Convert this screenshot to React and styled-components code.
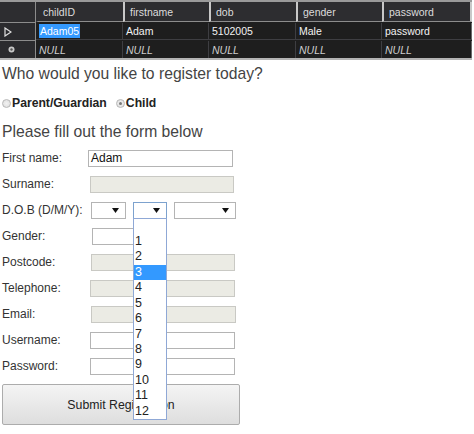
import React from "react";
import styled, { createGlobalStyle } from "styled-components";

const GlobalStyle = createGlobalStyle`
  body {
    margin: 0;
    background: #ffffff;
    font-family: "Liberation Sans", Arial, sans-serif;
    color: #333333;
  }
`;

const Page = styled.div`
  width: 474px;
  height: 434px;
  overflow: hidden;
  position: relative;
`;

/* ---------- results grid ---------- */

const ResultsGrid = styled.div`
  width: 472px;
  display: grid;
  grid-template-columns: 36px 87px 86px 87px 86px 90px;
  background: #1e1e1e;
  border-top: 2px solid #9a9a9a;
  border-bottom: 2px solid #b4b4b4;
  font-family: "Liberation Sans", Arial, sans-serif;
  font-size: 10.5px;
`;

const CornerCell = styled.div`
  height: 20px;
  background: #2d2d30;
  border-right: 1px solid #8c8c8c;
  border-bottom: 1px solid #8c8c8c;
`;

const HeaderCell = styled.div`
  height: 20px;
  box-sizing: border-box;
  background: #2d2d30;
  color: #dcdcdc;
  display: flex;
  align-items: center;
  padding-left: 5px;
  border-left: 2px solid ${(p) => (p.$first ? "transparent" : "#c8c8c8")};
  border-right: ${(p) => (p.$last ? "2px solid #c8c8c8" : "none")};
  border-bottom: 1px solid #8c8c8c;
`;

const RowHeader = styled.div`
  height: 17px;
  background: #2b2b2e;
  border-right: 1px solid #8c8c8c;
  border-bottom: ${(p) => (p.$last ? "none" : "1px solid #8c8c8c")};
  display: flex;
  align-items: center;
  padding-left: ${(p) => p.$pad}px;
`;

const DataCell = styled.div`
  height: 17px;
  box-sizing: border-box;
  display: flex;
  align-items: center;
  padding-left: 3px;
  color: ${(p) => (p.$null ? "#cfcfcf" : "#f2f2f2")};
  font-style: ${(p) => (p.$null ? "italic" : "normal")};
  border-right: 1px solid ${(p) => (p.$last ? "#6a6a6a" : "#3e3e42")};
  border-bottom: ${(p) => (p.$lastRow ? "none" : "1px solid #3e3e42")};
`;

const Selected = styled.span`
  background: #3399ff;
  color: #ffffff;
  padding: 1px 1px;
`;

/* ---------- form ---------- */

const Content = styled.div`
  padding-left: 2px;
`;

const Title = styled.div`
  font-size: 15.7px;
  line-height: 18px;
  color: #444444;
  margin-top: ${(p) => p.$top}px;
`;

const RadioRow = styled.div`
  display: flex;
  align-items: center;
  height: 16px;
  margin-top: 12px;
  gap: 9px;
`;

const RadioLabel = styled.label`
  display: flex;
  align-items: center;
  font-size: 12.2px;
  font-weight: bold;
  color: #222222;
  gap: 1px;
`;

const Radio = styled.span`
  width: 9px;
  height: 9px;
  box-sizing: border-box;
  border-radius: 50%;
  border: 1px solid #b8b8b8;
  background: radial-gradient(circle, #f2f2f2 0%, #dcdcdc 100%);
  display: flex;
  align-items: center;
  justify-content: center;
  &::after {
    content: "";
    width: 3px;
    height: 3px;
    border-radius: 50%;
    background: ${(p) => (p.$checked ? "#7a7a7a" : "transparent")};
  }
`;

const Form = styled.div`
  margin-top: 4px;
`;

const FieldRow = styled.div`
  height: 26px;
  display: flex;
  align-items: center;
`;

const Label = styled.div`
  width: 88px;
  font-size: 12px;
  color: #333333;
`;

const TextBox = styled.div`
  width: ${(p) => p.$w}px;
  height: 17px;
  box-sizing: border-box;
  margin-left: ${(p) => p.$ml || 0}px;
  border: 1px solid ${(p) => (p.$disabled ? "#c9c9c4" : "#b4b4b4")};
  background: ${(p) => (p.$disabled ? "#ebebe4" : "#ffffff")};
  font-size: 12px;
  color: #111111;
  padding-left: 2px;
  display: flex;
  align-items: center;
`;

const SelectGroup = styled.div`
  display: flex;
  gap: 7px;
  margin-left: 1px;
`;

const SelectWrap = styled.div`
  position: relative;
`;

const Select = styled.div`
  width: ${(p) => p.$w}px;
  height: 17px;
  box-sizing: border-box;
  border: 1px solid ${(p) => (p.$focus ? "#7da2ce" : "#b4b4b4")};
  background: #ffffff;
  display: flex;
  align-items: center;
  justify-content: flex-end;
  padding-right: 6px;
`;

const DropList = styled.div`
  position: absolute;
  top: 16px;
  left: 0;
  width: 34px;
  box-sizing: border-box;
  border: 1px solid #8fa8d6;
  background: #ffffff;
  z-index: 5;
`;

const Option = styled.div`
  height: 15.45px;
  line-height: 15.45px;
  font-size: 12.5px;
  padding-left: 1px;
  color: ${(p) => (p.$active ? "#ffffff" : "#222222")};
  background: ${(p) => (p.$active ? "#3399ff" : "transparent")};
`;

const SubmitButton = styled.button`
  display: block;
  width: 238px;
  height: 41px;
  margin-top: 5px;
  border: 1px solid #acacac;
  border-radius: 2px;
  background: linear-gradient(#f4f4f4, #dedede);
  font-family: "Liberation Sans", Arial, sans-serif;
  font-size: 12.3px;
  color: #222222;
  padding: 0;
`;

const Arrow = () => (
  <svg width="7" height="5" viewBox="0 0 7 5">
    <path d="M0 0H7L3.5 5Z" fill="#111" />
  </svg>
);

const columns = ["childID", "firstname", "dob", "gender", "password"];
const row = ["Adam05", "Adam", "5102005", "Male", "password"];
const months = ["", "1", "2", "3", "4", "5", "6", "7", "8", "9", "10", "11", "12"];

const fields = [
  { label: "First name:", value: "Adam", w: 145, ml: -2 },
  { label: "Surname:", disabled: true, w: 144 },
  { label: "D.O.B (D/M/Y):", dob: true },
  { label: "Gender:", w: 70, ml: 2 },
  { label: "Postcode:", disabled: true, w: 144, ml: 1 },
  { label: "Telephone:", disabled: true, w: 145 },
  { label: "Email:", disabled: true, w: 145, ml: 1 },
  { label: "Username:", w: 145 },
  { label: "Password:", w: 145 },
];

export default function App() {
  return (
    <Page>
      <GlobalStyle />
      <ResultsGrid>
        <CornerCell />
        {columns.map((c, i) => (
          <HeaderCell key={c} $first={i === 0} $last={i === columns.length - 1}>
            {c}
          </HeaderCell>
        ))}

        <RowHeader $pad={4}>
          <svg width="8" height="10" viewBox="0 0 8 10">
            <path d="M1 1L7 5L1 9Z" fill="none" stroke="#e0e0e0" strokeWidth="1.2" />
          </svg>
        </RowHeader>
        {row.map((v, i) => (
          <DataCell key={i} $last={i === row.length - 1}>
            {i === 0 ? <Selected>{v}</Selected> : v}
          </DataCell>
        ))}

        <RowHeader $pad={8} $last>
          <svg width="7" height="7" viewBox="0 0 7 7">
            <circle cx="3.5" cy="3.5" r="3" fill="#c8c8c8" />
            <circle cx="3.5" cy="3.5" r="1.2" fill="#555" />
          </svg>
        </RowHeader>
        {row.map((_, i) => (
          <DataCell key={i} $null $lastRow $last={i === row.length - 1}>
            NULL
          </DataCell>
        ))}
      </ResultsGrid>

      <Content>
        <Title $top={5}>Who would you like to register today?</Title>
        <RadioRow>
          <RadioLabel>
            <Radio />
            Parent/Guardian
          </RadioLabel>
          <RadioLabel>
            <Radio $checked />
            Child
          </RadioLabel>
        </RadioRow>
        <Title $top={12}>Please fill out the form below</Title>

        <Form>
          {fields.map((f) => (
            <FieldRow key={f.label}>
              <Label>{f.label}</Label>
              {f.dob ? (
                <SelectGroup>
                  <Select $w={35}>
                    <Arrow />
                  </Select>
                  <SelectWrap>
                    <Select $w={34} $focus>
                      <Arrow />
                    </Select>
                    <DropList>
                      {months.map((m, i) => (
                        <Option key={i} $active={m === "3"}>
                          {m}
                        </Option>
                      ))}
                    </DropList>
                  </SelectWrap>
                  <Select $w={62}>
                    <Arrow />
                  </Select>
                </SelectGroup>
              ) : (
                <TextBox $w={f.w} $ml={f.ml} $disabled={f.disabled}>
                  {f.value}
                </TextBox>
              )}
            </FieldRow>
          ))}
        </Form>

        <SubmitButton>Submit Registration</SubmitButton>
      </Content>
    </Page>
  );
}
